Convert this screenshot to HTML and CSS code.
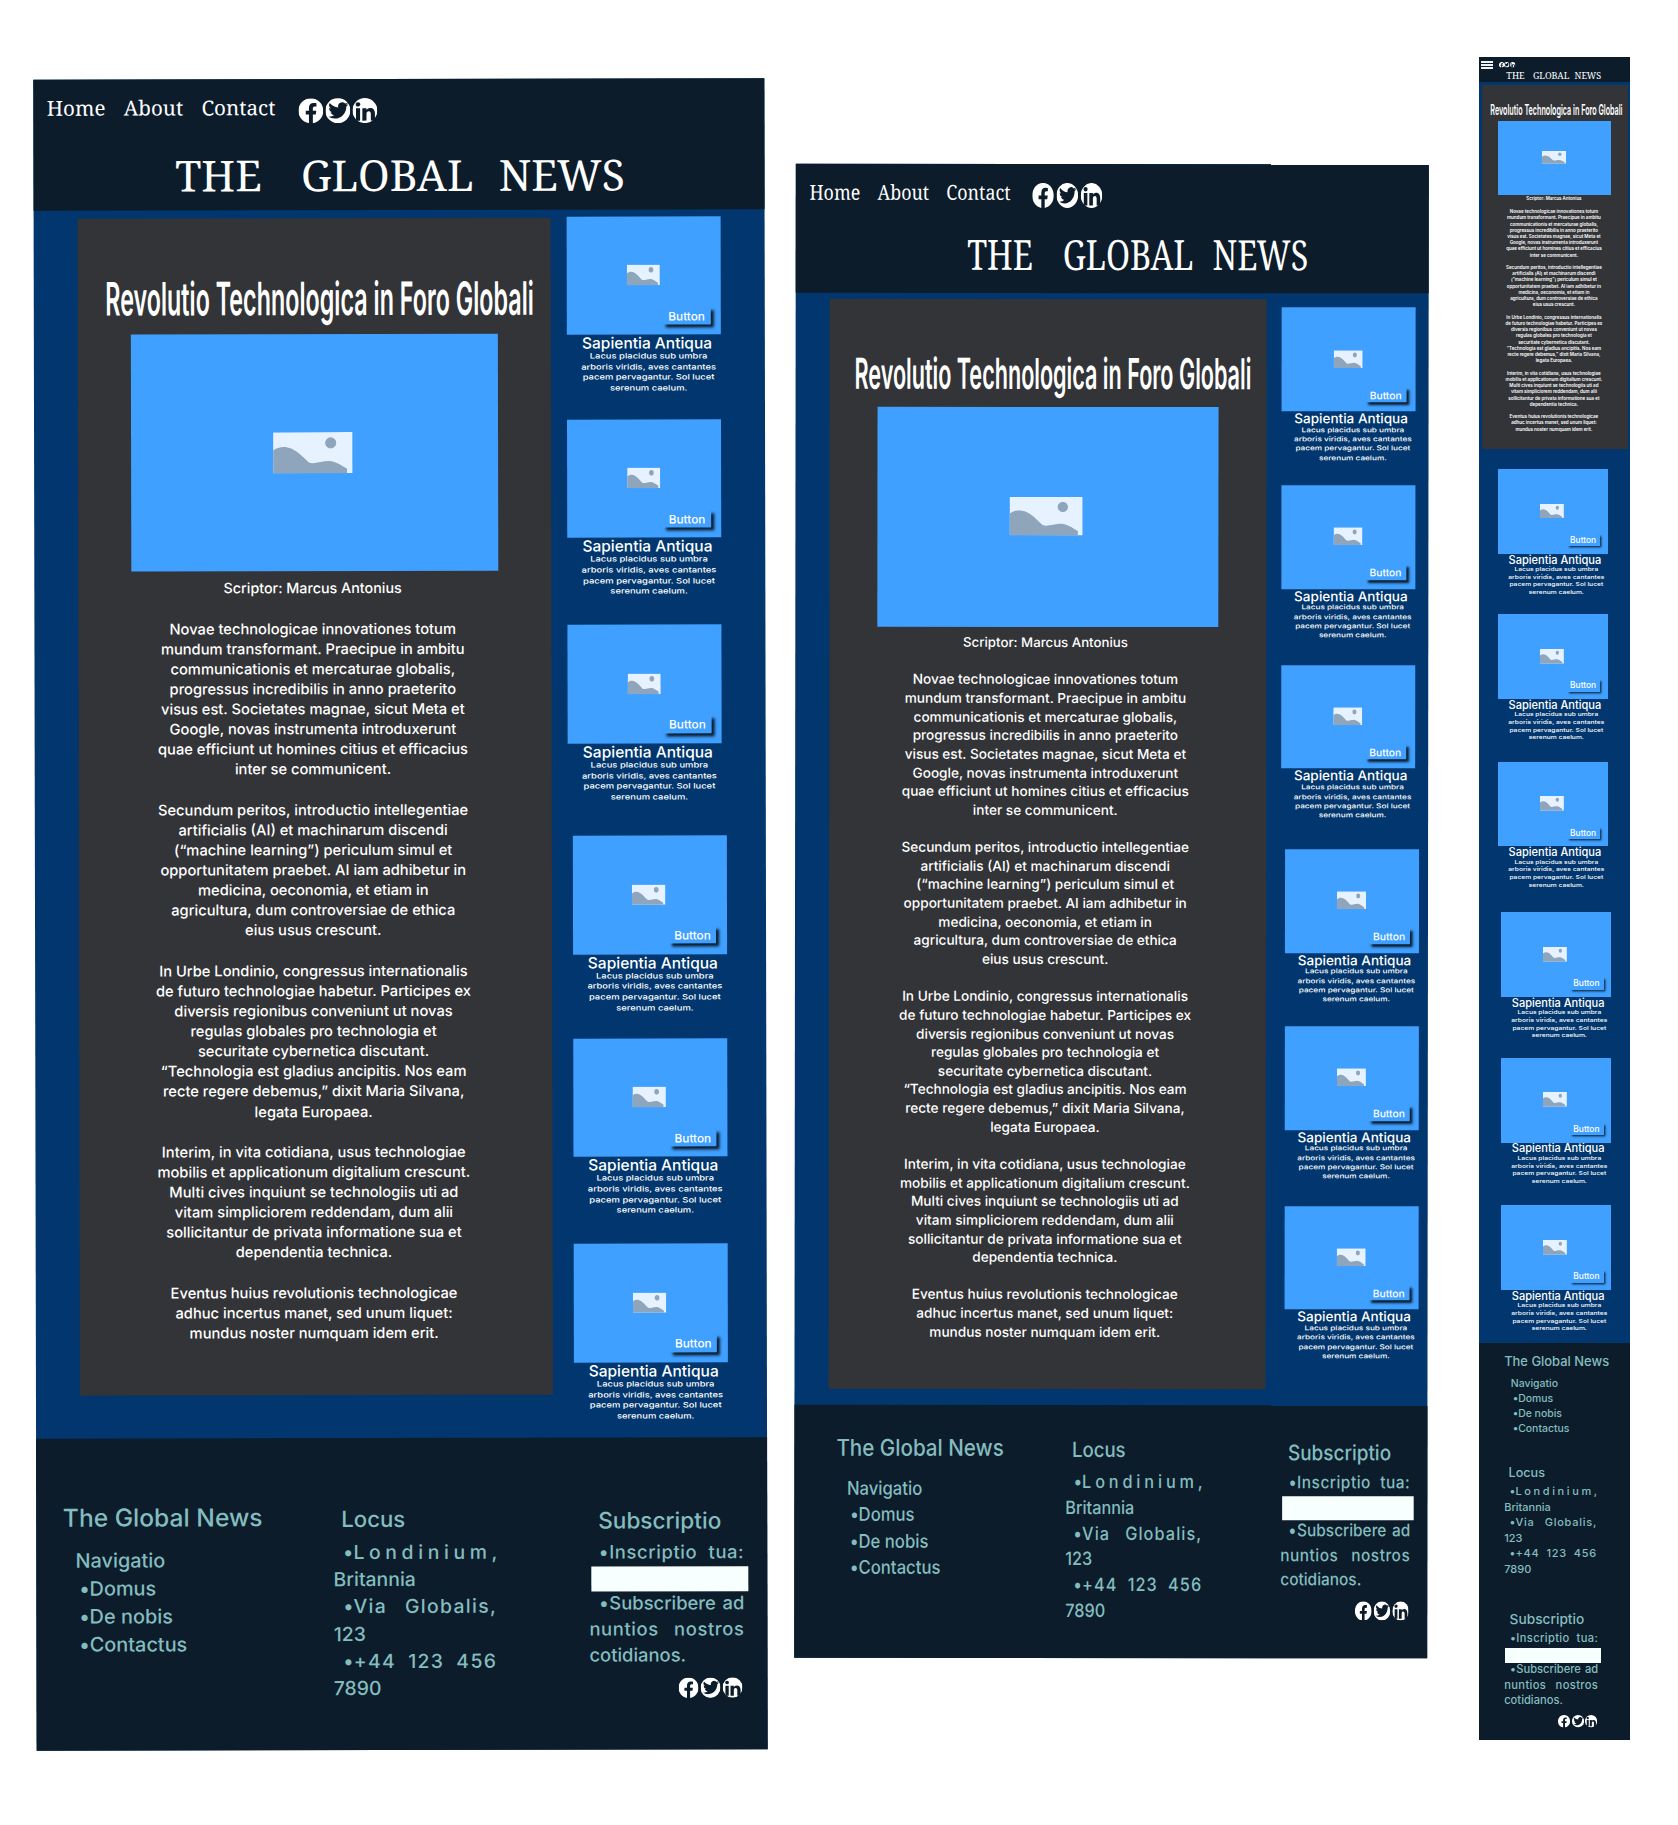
FILE: index.html
```html
<!DOCTYPE html>
<html lang="la">
<head>
<meta charset="utf-8">
<title>The Global News</title>
<link rel="stylesheet" href="styles.css">
</head>
<body>
<svg class="sprite" width="0" height="0" aria-hidden="true">
  <symbol id="facebook" viewBox="0 0 16 16" preserveAspectRatio="none"><path fill="#fff" d="M16 8.049c0-4.446-3.582-8.05-8-8.05C3.58 0-.002 3.603-.002 8.05c0 4.017 2.926 7.347 6.75 7.951v-5.625h-2.03V8.05H6.75V6.275c0-2.017 1.195-3.131 3.022-3.131.876 0 1.791.157 1.791.157v1.98h-1.009c-.993 0-1.303.621-1.303 1.258v1.51h2.218l-.354 2.326H9.25V16c3.824-.604 6.75-3.934 6.75-7.951"/></symbol>
  <symbol id="twitter" viewBox="0 0 16 16" preserveAspectRatio="none"><circle cx="8" cy="8" r="8" fill="#fff"/><path fill="#0c1c2b" transform="translate(1.9 1.1) scale(.8)" d="M5.026 15c6.038 0 9.341-5.003 9.341-9.334q.002-.211-.006-.422A6.7 6.7 0 0 0 16 3.542a6.7 6.7 0 0 1-1.889.518 3.3 3.3 0 0 0 1.447-1.817 6.5 6.5 0 0 1-2.087.793A3.286 3.286 0 0 0 7.875 6.03a9.32 9.32 0 0 1-6.767-3.429 3.29 3.29 0 0 0 1.018 4.382A3.3 3.3 0 0 1 .64 6.575v.045a3.29 3.29 0 0 0 2.632 3.218 3.2 3.2 0 0 1-.865.115 3 3 0 0 1-.614-.057 3.28 3.28 0 0 0 3.067 2.277A6.6 6.6 0 0 1 .78 13.58a6 6 0 0 1-.78-.045A9.34 9.34 0 0 0 5.026 15"/></symbol>
  <symbol id="linkedin" viewBox="0 0 16 16" preserveAspectRatio="none"><circle cx="8" cy="8" r="8" fill="#fff"/><path fill="#0c1c2b" transform="translate(-.5 -.3) scale(1.1)" d="M4.943 13.394V6.169H2.542v7.225zm-1.2-8.212c.837 0 1.358-.554 1.358-1.248-.015-.709-.52-1.248-1.342-1.248S2.4 3.226 2.4 3.934c0 .694.521 1.248 1.327 1.248zm4.908 8.212V9.359c0-.216.016-.432.08-.586.173-.431.568-.878 1.232-.878.869 0 1.216.662 1.216 1.634v3.865h2.401V9.25c0-2.22-1.184-3.252-2.764-3.252-1.274 0-1.845.7-2.165 1.193v.025h-.016l.016-.025V6.169h-2.4c.03.678 0 7.225 0 7.225z"/></symbol>
  <symbol id="picture" viewBox="0 0 100 52" preserveAspectRatio="none"><path fill="#e6f2ff" d="M0 0h100v52H0z"/><path fill="#8fa5bb" d="M0 23C6 18 15 17 23 20.500C34 26 40 34 45 38C52 41 64 35 73 36.500C81 38 88 43 93 46V52H0z"/><circle cx="72.500" cy="13.500" r="7" fill="#8fa5bb"/></symbol>
</svg>

<div class="board desktop">
  <header class="header">
    <nav class="nav">
      <a>Home</a><a>About</a><a>Contact</a>
      <div class="social"><svg><use href="#facebook"/></svg><svg><use href="#twitter"/></svg><svg><use href="#linkedin"/></svg></div>
    </nav>
    <h1 class="masthead"><span>THE</span><span>GLOBAL</span><span>NEWS</span></h1>
  </header>
  <main class="main">
    <article class="article">
      <h2 class="headline"><span>Revolutio Technologica in Foro Globali</span></h2>
      <div class="hero"><svg><use href="#picture"/></svg></div>
      <p class="author">Scriptor: Marcus Antonius</p>
      <p>Novae technologicae innovationes totum<br>mundum transformant. Praecipue in ambitu<br>communicationis et mercaturae globalis,<br>progressus incredibilis in anno praeterito<br>visus est. Societates magnae, sicut Meta et<br>Google, novas instrumenta introduxerunt<br>quae efficiunt ut homines citius et efficacius<br>inter se communicent.</p>
      <p>Secundum peritos, introductio intellegentiae<br>artificialis (AI) et machinarum discendi<br>(“machine learning”) periculum simul et<br>opportunitatem praebet. AI iam adhibetur in<br>medicina, oeconomia, et etiam in<br>agricultura, dum controversiae de ethica<br>eius usus crescunt.</p>
      <p>In Urbe Londinio, congressus internationalis<br>de futuro technologiae habetur. Participes ex<br>diversis regionibus conveniunt ut novas<br>regulas globales pro technologia et<br>securitate cybernetica discutant.<br>“Technologia est gladius ancipitis. Nos eam<br>recte regere debemus,” dixit Maria Silvana,<br>legata Europaea.</p>
      <p>Interim, in vita cotidiana, usus technologiae<br>mobilis et applicationum digitalium crescunt.<br>Multi cives inquiunt se technologiis uti ad<br>vitam simpliciorem reddendam, dum alii<br>sollicitantur de privata informatione sua et<br>dependentia technica.</p>
      <p>Eventus huius revolutionis technologicae<br>adhuc incertus manet, sed unum liquet:<br>mundus noster numquam idem erit.</p>
    </article>
    <aside class="cards">
      <section class="card"><div class="thumb"><svg><use href="#picture"/></svg><span class="button">Button</span></div><h3>Sapientia Antiqua</h3><p>Lacus placidus sub umbra<br>arboris viridis, aves cantantes<br>pacem pervagantur. Sol lucet<br>serenum caelum.</p></section>
      <section class="card"><div class="thumb"><svg><use href="#picture"/></svg><span class="button">Button</span></div><h3>Sapientia Antiqua</h3><p>Lacus placidus sub umbra<br>arboris viridis, aves cantantes<br>pacem pervagantur. Sol lucet<br>serenum caelum.</p></section>
      <section class="card"><div class="thumb"><svg><use href="#picture"/></svg><span class="button">Button</span></div><h3>Sapientia Antiqua</h3><p>Lacus placidus sub umbra<br>arboris viridis, aves cantantes<br>pacem pervagantur. Sol lucet<br>serenum caelum.</p></section>
      <section class="card"><div class="thumb"><svg><use href="#picture"/></svg><span class="button">Button</span></div><h3>Sapientia Antiqua</h3><p>Lacus placidus sub umbra<br>arboris viridis, aves cantantes<br>pacem pervagantur. Sol lucet<br>serenum caelum.</p></section>
      <section class="card"><div class="thumb"><svg><use href="#picture"/></svg><span class="button">Button</span></div><h3>Sapientia Antiqua</h3><p>Lacus placidus sub umbra<br>arboris viridis, aves cantantes<br>pacem pervagantur. Sol lucet<br>serenum caelum.</p></section>
      <section class="card"><div class="thumb"><svg><use href="#picture"/></svg><span class="button">Button</span></div><h3>Sapientia Antiqua</h3><p>Lacus placidus sub umbra<br>arboris viridis, aves cantantes<br>pacem pervagantur. Sol lucet<br>serenum caelum.</p></section>
    </aside>
  </main>
  <footer class="footer">
    <section class="col site">
      <h4>The Global News</h4>
      <ul><li class="plain">Navigatio</li><li>Domus</li><li>De nobis</li><li>Contactus</li></ul>
    </section>
    <section class="col place">
      <h4>Locus</h4>
      <div class="row item wide">Londinium,</div><div class="row">Britannia</div>
      <div class="row item full">Via Globalis,</div><div class="row">123</div>
      <div class="row item full">+44 123 456</div><div class="row">7890</div>
    </section>
    <section class="col signup">
      <h4>Subscriptio</h4>
      <div class="row item full">Inscriptio tua:</div>
      <div class="field"></div>
      <div class="row item full tight">Subscribere ad</div><div class="row full">nuntios nostros</div><div class="row">cotidianos.</div>
      <div class="social"><svg><use href="#facebook"/></svg><svg><use href="#twitter"/></svg><svg><use href="#linkedin"/></svg></div>
    </section>
  </footer>
</div>

<div class="board tablet">
  <header class="header">
    <nav class="nav">
      <a>Home</a><a>About</a><a>Contact</a>
      <div class="social"><svg><use href="#facebook"/></svg><svg><use href="#twitter"/></svg><svg><use href="#linkedin"/></svg></div>
    </nav>
    <h1 class="masthead"><span>THE</span><span>GLOBAL</span><span>NEWS</span></h1>
  </header>
  <main class="main">
    <article class="article">
      <h2 class="headline"><span>Revolutio Technologica in Foro Globali</span></h2>
      <div class="hero"><svg><use href="#picture"/></svg></div>
      <p class="author">Scriptor: Marcus Antonius</p>
      <p>Novae technologicae innovationes totum<br>mundum transformant. Praecipue in ambitu<br>communicationis et mercaturae globalis,<br>progressus incredibilis in anno praeterito<br>visus est. Societates magnae, sicut Meta et<br>Google, novas instrumenta introduxerunt<br>quae efficiunt ut homines citius et efficacius<br>inter se communicent.</p>
      <p>Secundum peritos, introductio intellegentiae<br>artificialis (AI) et machinarum discendi<br>(“machine learning”) periculum simul et<br>opportunitatem praebet. AI iam adhibetur in<br>medicina, oeconomia, et etiam in<br>agricultura, dum controversiae de ethica<br>eius usus crescunt.</p>
      <p>In Urbe Londinio, congressus internationalis<br>de futuro technologiae habetur. Participes ex<br>diversis regionibus conveniunt ut novas<br>regulas globales pro technologia et<br>securitate cybernetica discutant.<br>“Technologia est gladius ancipitis. Nos eam<br>recte regere debemus,” dixit Maria Silvana,<br>legata Europaea.</p>
      <p>Interim, in vita cotidiana, usus technologiae<br>mobilis et applicationum digitalium crescunt.<br>Multi cives inquiunt se technologiis uti ad<br>vitam simpliciorem reddendam, dum alii<br>sollicitantur de privata informatione sua et<br>dependentia technica.</p>
      <p>Eventus huius revolutionis technologicae<br>adhuc incertus manet, sed unum liquet:<br>mundus noster numquam idem erit.</p>
    </article>
    <aside class="cards">
      <section class="card"><div class="thumb"><svg><use href="#picture"/></svg><span class="button">Button</span></div><h3>Sapientia Antiqua</h3><p>Lacus placidus sub umbra<br>arboris viridis, aves cantantes<br>pacem pervagantur. Sol lucet<br>serenum caelum.</p></section>
      <section class="card"><div class="thumb"><svg><use href="#picture"/></svg><span class="button">Button</span></div><h3>Sapientia Antiqua</h3><p>Lacus placidus sub umbra<br>arboris viridis, aves cantantes<br>pacem pervagantur. Sol lucet<br>serenum caelum.</p></section>
      <section class="card"><div class="thumb"><svg><use href="#picture"/></svg><span class="button">Button</span></div><h3>Sapientia Antiqua</h3><p>Lacus placidus sub umbra<br>arboris viridis, aves cantantes<br>pacem pervagantur. Sol lucet<br>serenum caelum.</p></section>
      <section class="card"><div class="thumb"><svg><use href="#picture"/></svg><span class="button">Button</span></div><h3>Sapientia Antiqua</h3><p>Lacus placidus sub umbra<br>arboris viridis, aves cantantes<br>pacem pervagantur. Sol lucet<br>serenum caelum.</p></section>
      <section class="card"><div class="thumb"><svg><use href="#picture"/></svg><span class="button">Button</span></div><h3>Sapientia Antiqua</h3><p>Lacus placidus sub umbra<br>arboris viridis, aves cantantes<br>pacem pervagantur. Sol lucet<br>serenum caelum.</p></section>
      <section class="card"><div class="thumb"><svg><use href="#picture"/></svg><span class="button">Button</span></div><h3>Sapientia Antiqua</h3><p>Lacus placidus sub umbra<br>arboris viridis, aves cantantes<br>pacem pervagantur. Sol lucet<br>serenum caelum.</p></section>
    </aside>
  </main>
  <footer class="footer">
    <section class="col site">
      <h4>The Global News</h4>
      <ul><li class="plain">Navigatio</li><li>Domus</li><li>De nobis</li><li>Contactus</li></ul>
    </section>
    <section class="col place">
      <h4>Locus</h4>
      <div class="row item wide">Londinium,</div><div class="row">Britannia</div>
      <div class="row item full">Via Globalis,</div><div class="row">123</div>
      <div class="row item full">+44 123 456</div><div class="row">7890</div>
    </section>
    <section class="col signup">
      <h4>Subscriptio</h4>
      <div class="row item full">Inscriptio tua:</div>
      <div class="field"></div>
      <div class="row item full tight">Subscribere ad</div><div class="row full">nuntios nostros</div><div class="row">cotidianos.</div>
      <div class="social"><svg><use href="#facebook"/></svg><svg><use href="#twitter"/></svg><svg><use href="#linkedin"/></svg></div>
    </section>
  </footer>
</div>

<div class="board mobile">
  <header class="header">
    <nav class="nav">
      <div class="menu"><i></i><i></i><i></i></div>
      <div class="social"><svg><use href="#facebook"/></svg><svg><use href="#twitter"/></svg><svg><use href="#linkedin"/></svg></div>
    </nav>
    <h1 class="masthead"><span>THE</span><span>GLOBAL</span><span>NEWS</span></h1>
  </header>
  <main class="main">
    <article class="article">
      <h2 class="headline"><span>Revolutio Technologica in Foro Globali</span></h2>
      <div class="hero"><svg><use href="#picture"/></svg></div>
      <p class="author">Scriptor: Marcus Antonius</p>
      <p>Novae technologicae innovationes totum<br>mundum transformant. Praecipue in ambitu<br>communicationis et mercaturae globalis,<br>progressus incredibilis in anno praeterito<br>visus est. Societates magnae, sicut Meta et<br>Google, novas instrumenta introduxerunt<br>quae efficiunt ut homines citius et efficacius<br>inter se communicent.</p>
      <p>Secundum peritos, introductio intellegentiae<br>artificialis (AI) et machinarum discendi<br>(“machine learning”) periculum simul et<br>opportunitatem praebet. AI iam adhibetur in<br>medicina, oeconomia, et etiam in<br>agricultura, dum controversiae de ethica<br>eius usus crescunt.</p>
      <p>In Urbe Londinio, congressus internationalis<br>de futuro technologiae habetur. Participes ex<br>diversis regionibus conveniunt ut novas<br>regulas globales pro technologia et<br>securitate cybernetica discutant.<br>“Technologia est gladius ancipitis. Nos eam<br>recte regere debemus,” dixit Maria Silvana,<br>legata Europaea.</p>
      <p>Interim, in vita cotidiana, usus technologiae<br>mobilis et applicationum digitalium crescunt.<br>Multi cives inquiunt se technologiis uti ad<br>vitam simpliciorem reddendam, dum alii<br>sollicitantur de privata informatione sua et<br>dependentia technica.</p>
      <p>Eventus huius revolutionis technologicae<br>adhuc incertus manet, sed unum liquet:<br>mundus noster numquam idem erit.</p>
    </article>
    <aside class="cards">
      <section class="card"><div class="thumb"><svg><use href="#picture"/></svg><span class="button">Button</span></div><h3>Sapientia Antiqua</h3><p>Lacus placidus sub umbra<br>arboris viridis, aves cantantes<br>pacem pervagantur. Sol lucet<br>serenum caelum.</p></section>
      <section class="card"><div class="thumb"><svg><use href="#picture"/></svg><span class="button">Button</span></div><h3>Sapientia Antiqua</h3><p>Lacus placidus sub umbra<br>arboris viridis, aves cantantes<br>pacem pervagantur. Sol lucet<br>serenum caelum.</p></section>
      <section class="card"><div class="thumb"><svg><use href="#picture"/></svg><span class="button">Button</span></div><h3>Sapientia Antiqua</h3><p>Lacus placidus sub umbra<br>arboris viridis, aves cantantes<br>pacem pervagantur. Sol lucet<br>serenum caelum.</p></section>
      <section class="card"><div class="thumb"><svg><use href="#picture"/></svg><span class="button">Button</span></div><h3>Sapientia Antiqua</h3><p>Lacus placidus sub umbra<br>arboris viridis, aves cantantes<br>pacem pervagantur. Sol lucet<br>serenum caelum.</p></section>
      <section class="card"><div class="thumb"><svg><use href="#picture"/></svg><span class="button">Button</span></div><h3>Sapientia Antiqua</h3><p>Lacus placidus sub umbra<br>arboris viridis, aves cantantes<br>pacem pervagantur. Sol lucet<br>serenum caelum.</p></section>
      <section class="card"><div class="thumb"><svg><use href="#picture"/></svg><span class="button">Button</span></div><h3>Sapientia Antiqua</h3><p>Lacus placidus sub umbra<br>arboris viridis, aves cantantes<br>pacem pervagantur. Sol lucet<br>serenum caelum.</p></section>
    </aside>
  </main>
  <footer class="footer">
    <section class="col site">
      <h4>The Global News</h4>
      <ul><li class="plain">Navigatio</li><li>Domus</li><li>De nobis</li><li>Contactus</li></ul>
    </section>
    <section class="col place">
      <h4>Locus</h4>
      <div class="row item wide">Londinium,</div><div class="row">Britannia</div>
      <div class="row item full">Via Globalis,</div><div class="row">123</div>
      <div class="row item full">+44 123 456</div><div class="row">7890</div>
    </section>
    <section class="col signup">
      <h4>Subscriptio</h4>
      <div class="row item full">Inscriptio tua:</div>
      <div class="field"></div>
      <div class="row item full tight">Subscribere ad</div><div class="row full">nuntios nostros</div><div class="row">cotidianos.</div>
      <div class="social"><svg><use href="#facebook"/></svg><svg><use href="#twitter"/></svg><svg><use href="#linkedin"/></svg></div>
    </section>
  </footer>
</div>
</body>
</html>
```
FILE: styles.css
```css
* { box-sizing: border-box; margin: 0; padding: 0; }

body {
  display: flex;
  align-items: flex-start;
  width: 1678px;
  height: 1825px;
  overflow: hidden;
  background: #fff;
  color: #fff;
  font-family: Inter, "Liberation Sans", sans-serif;
  font-weight: 500;
}

.sprite { position: absolute; }
svg { display: block; }
h1, h2, h3, h4 { font-weight: 500; }
ul { list-style: none; }

/* ---- boards: --u scales the article, --c the cards, --f a footer column ---- */
.board {
  flex: none;
  display: flex;
  flex-direction: column;
  background: #01376e;
}
.desktop { --u: 1px; --c: 1px; width: 730.5px; height: 1670.5px; margin: 79px 0 0 34.5px; transform: rotate(-.115deg); }
.tablet { --u: .926px; --c: .874px; width: 632.7px; height: 1494px; margin: 164px 0 0 30.2px; transform: rotate(.063deg); }
.mobile { --u: .3088px; --c: .714px; width: 151px; height: 1683px; margin: 57px 0 0 51.1px; }

/* ---- header ---- */
.header { flex: none; background: #0c1c2b; font-family: "Noto Serif", "Liberation Serif", serif; font-weight: 400; overflow: hidden; }
.desktop .header { height: 131px; padding-top: 14px; }
.tablet .header { height: 128.9px; padding-top: 14px; }
.mobile .header { height: 25.3px; padding-top: 4.3px; }

.nav { display: flex; align-items: flex-start; height: 30px; font-size: 20.6px; line-height: 28px; transform-origin: 0 0; }
.desktop .nav { gap: 18.3px; padding-left: 13.4px; }
.tablet .nav { gap: 20px; padding-left: 15.8px; transform: scaleX(.866); }
.mobile .nav { height: 9.2px; padding-left: 2.3px; gap: 5.9px; }

.social { display: flex; }
.nav .social { margin: 4.5px 0 0 4.8px; gap: 2.1px; }
.nav .social svg { width: 25px; height: 25px; }
.tablet .nav .social { gap: 2.9px; }
.mobile .nav .social { margin: 1px 0 0; gap: .4px; }
.mobile .nav .social svg { width: 5.4px; height: 5.6px; }

.menu { display: flex; flex-direction: column; gap: 1px; width: 11.5px; }
.menu i { height: 2px; background: #f0f3f5; }

.masthead { display: flex; font-weight: 400; white-space: nowrap; line-height: 50px; transform-origin: 0 0; }
.masthead span:nth-child(1) { margin-right: .92em; }
.masthead span:nth-child(2) { margin-right: .59em; }
.desktop .masthead { margin-top: 27.3px; padding-left: 141.6px; font-size: 42.7px; }
.tablet .masthead { margin-top: 20.5px; padding-left: 220.5px; font-size: 41.6px; transform: scaleX(.778); }
.mobile .masthead { padding-left: 27.4px; font-size: 9px; line-height: 12px; }

/* ---- main ---- */
.main { flex: none; display: flex; align-items: flex-start; }
.desktop .main { height: 1227.7px; }
.tablet .main { height: 1111.7px; }
.mobile .main { height: 1260.4px; flex-direction: column; }

.article {
  flex: none;
  width: calc(473 * var(--u));
  height: calc(1177.3 * var(--u));
  padding-top: calc(50.5 * var(--u));
  background: #333437;
}
.desktop .article { margin: 7.7px 0 0 44.3px; }
.tablet .article { margin: 6.3px 0 0 33.5px; }
.mobile .article { margin: 3px 0 0 2.7px; }

.headline {
  display: flex;
  justify-content: center;
  margin-left: calc(9.4 * var(--u));
  font-size: calc(46 * var(--u));
  font-weight: 600;
  line-height: calc(60 * var(--u));
  white-space: nowrap;
}
.headline span { flex: none; transform: scaleX(.507); }

.hero {
  display: flex;
  align-items: center;
  justify-content: center;
  width: calc(367.7 * var(--u));
  height: calc(237 * var(--u));
  margin: calc(6.3 * var(--u)) 0 0 calc(52.4 * var(--u));
  padding: 0 calc(3.4 * var(--u)) calc(1.4 * var(--u)) 0;
  background: #40a0ff;
}
.hero svg { width: calc(79.5 * var(--u)); height: calc(41.5 * var(--u)); }

.article p {
  margin-top: calc(20.13 * var(--u));
  padding-right: calc(5 * var(--u));
  font-size: calc(14.7 * var(--u));
  line-height: calc(20.13 * var(--u));
  text-align: center;
  white-space: nowrap;
}
.article .author { margin-top: calc(6.3 * var(--u)); font-size: calc(14.3 * var(--u)); }
.article .author + p { margin-top: calc(20.7 * var(--u)); }
.mobile .article p { font-weight: 600; letter-spacing: -.02px; }

/* ---- cards ---- */
.cards {
  display: grid;
  grid-template-rows: calc(203.2 * var(--c)) calc(205.8 * var(--c)) calc(210.7 * var(--c)) calc(202.6 * var(--c)) calc(205.6 * var(--c)) auto;
}
.desktop .cards { margin: 6.5px 0 0 16.2px; }
.tablet .cards { margin: 14.4px 0 0 14.4px; }
.mobile .cards { margin: 20.2px 0 0 19px; grid-template-rows: 145.2px 147.4px 150.7px 145.6px 147.4px auto; }

.card:nth-child(n + 4) { margin-left: calc(4.6 * var(--c)); }
.thumb {
  position: relative;
  display: flex;
  align-items: center;
  justify-content: center;
  width: calc(154 * var(--c));
  height: calc(118.6 * var(--c));
  padding: 0 calc(2.2 * var(--c)) calc(1.2 * var(--c)) 0;
  background: #40a0ff;
}
.thumb svg { width: calc(33.5 * var(--c)); height: calc(20.7 * var(--c)); }
.button {
  position: absolute;
  left: calc(96 * var(--c));
  top: calc(91 * var(--c));
  width: calc(47.3 * var(--c));
  height: calc(17.3 * var(--c));
  padding-left: calc(5 * var(--c));
  background: #40a0ff;
  box-shadow: calc(3 * var(--c)) calc(3 * var(--c)) calc(3 * var(--c)) #0b1a29;
  font-size: calc(11.8 * var(--c));
  line-height: calc(18.8 * var(--c));
}
.card h3 {
  width: calc(159.4 * var(--c));
  margin-top: calc(.1 * var(--c));
  font-size: calc(15.5 * var(--c));
  line-height: calc(18 * var(--c));
  text-align: center;
}
.card p {
  width: calc(163.4 * var(--c));
  margin-top: calc(-1.1 * var(--c));
  font-size: calc(7.6 * var(--c));
  line-height: calc(10.65 * var(--c));
  text-align: center;
  white-space: nowrap;
  transform: scaleX(1.24);
}
.mobile .card h3, .mobile .card p { margin-top: -.2px; }

/* ---- footer ---- */
.footer { flex: 1; display: grid; align-items: start; background: #0c1c2b; color: #84bdbf; }
.desktop .footer { padding-left: 26.6px; grid-template-columns: 270.6px 255.8px auto; }
.tablet .footer { padding-left: 42.2px; grid-template-columns: 228.4px 215.2px auto; }
.mobile .footer { padding: 11.4px 0 0 25.2px; grid-template-rows: 110.8px 146.3px auto; }

.col { --f: 1px; transform-origin: 0 0; white-space: nowrap; }
.desktop .site { margin-top: 63.9px; }
.desktop .place { margin-top: 67.2px; }
.desktop .signup { margin-top: 69px; }
.tablet .col { --f: .943px; transform: scaleX(.889); }
.tablet .site { margin-top: 29.6px; }
.tablet .place { margin-top: 32.4px; }
.tablet .signup { margin-top: 34.7px; }
.mobile .site { --f: .526px; }
.mobile .place { --f: .568px; }
.mobile .signup { --f: .607px; }

.site h4 { font-size: calc(24.6 * var(--f)); line-height: calc(30 * var(--f)); }
.site ul { margin-top: calc(14.2 * var(--f)); padding-left: calc(16.2 * var(--f)); font-size: calc(19.9 * var(--f)); line-height: calc(28 * var(--f)); }
.site .plain { margin-left: calc(-3.6 * var(--f)); }
.site li:not(.plain)::before, .item::before { content: "•"; display: inline-block; width: calc(10.4 * var(--f)); letter-spacing: 0; text-align: left; text-align-last: left; }

.place { width: calc(163.5 * var(--f)); font-size: calc(19.4 * var(--f)); line-height: calc(27.3 * var(--f)); }
.place h4 { margin: 0 0 calc(6 * var(--f)) calc(7.8 * var(--f)); font-size: calc(22.2 * var(--f)); line-height: calc(28 * var(--f)); }
.signup { width: calc(155 * var(--f)); font-size: calc(18.4 * var(--f)); line-height: calc(26 * var(--f)); }
.signup h4 { margin: 0 0 calc(4.2 * var(--f)) calc(9 * var(--f)); font-size: calc(22.6 * var(--f)); line-height: calc(28 * var(--f)); }

.item { padding-left: calc(9.6 * var(--f)); }
.full { text-align-last: justify; letter-spacing: calc(1.3 * var(--f)); }
.wide { letter-spacing: calc(4.6 * var(--f)); }
.signup .full { letter-spacing: calc(.6 * var(--f)); }
.signup .tight { letter-spacing: 0; }

.field { width: calc(157.6 * var(--f)); height: calc(25.6 * var(--f)); margin: calc(1.7 * var(--f)) 0 calc(-2 * var(--f)) calc(1.7 * var(--f)); background: #f8ffff; }
.signup .social { justify-content: flex-end; gap: calc(1.9 * var(--f)); margin-top: calc(10.2 * var(--f)); padding-right: calc(1.9 * var(--f)); }
.signup .social svg { width: calc(20 * var(--f)); height: calc(20.5 * var(--f)); }
```
